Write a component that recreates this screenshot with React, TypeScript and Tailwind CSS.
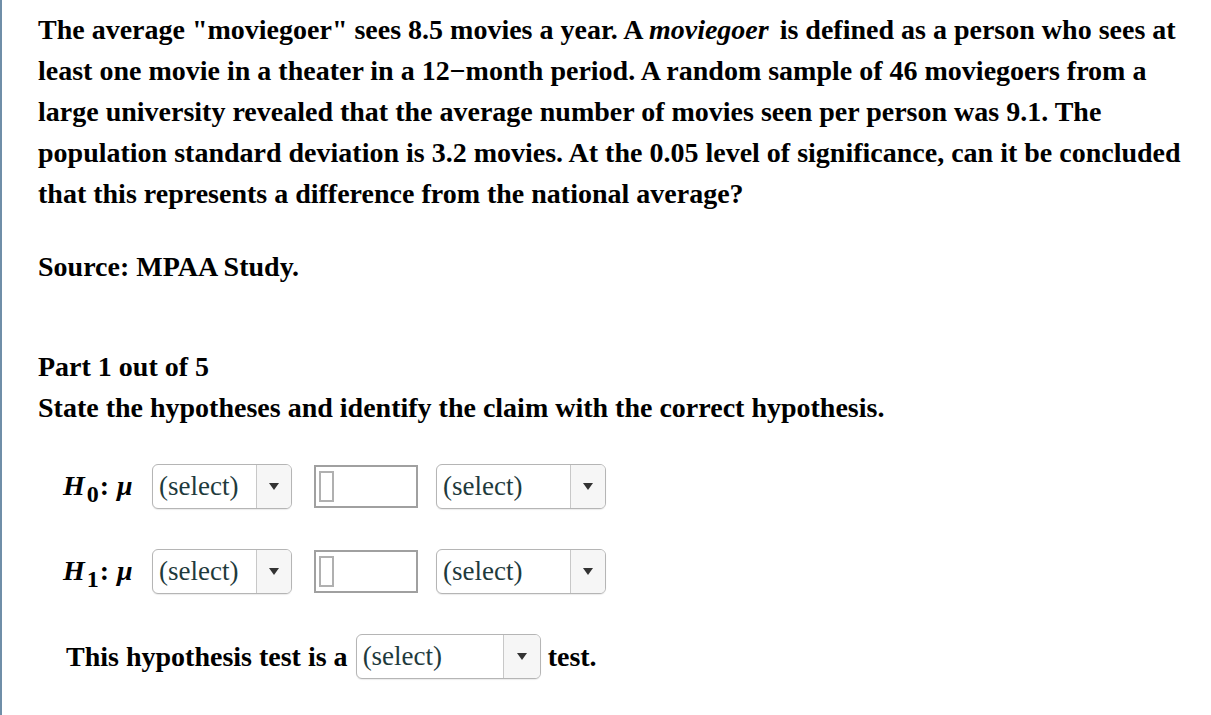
import React from "react";

function Select({ width, arrowWidth = 35 }: { width: number; arrowWidth?: number }) {
  return (
    <div
      className="flex h-[45px] rounded-[6px] border border-[#b5b5b5] bg-white shadow-[0_1px_1px_rgba(0,0,0,0.08)] overflow-hidden"
      style={{ width }}
    >
      <div className="flex-1 flex items-center pl-[6px] text-[27px] font-normal text-[#1e3a3c]">
        (select)
      </div>
      <div
        className="flex items-center justify-center border-l border-[#c8c8c8] bg-[#f6f6f6]"
        style={{ width: arrowWidth }}
      >
        <svg width="10" height="7" viewBox="0 0 10 7">
          <path d="M0 0 L10 0 L5 7 Z" fill="#333" />
        </svg>
      </div>
    </div>
  );
}

function Blank() {
  return (
    <div className="flex items-center h-[43px] w-[104px] border-2 border-[#a0a0a0] bg-white pl-[3px]">
      <div className="h-[31px] w-[15px] border-2 border-[#b0b0b0]" />
    </div>
  );
}

function HypRow({ sub }: { sub: string }) {
  return (
    <div className="flex items-center">
      <div className="flex items-baseline w-[114px] pl-[25px] text-[28px] font-bold italic">
        <span>H</span>
        <span className="text-[24px] not-italic relative top-[7px] ml-[2px]">{sub}</span>
        <span className="not-italic ml-[1px]">:</span>
        <span className="ml-[8px]">μ</span>
      </div>
      <Select width={140} />
      <div className="w-[22px]" />
      <Blank />
      <div className="w-[18px]" />
      <Select width={170} />
    </div>
  );
}

export default function App() {
  return (
    <div
      className="min-h-[715px] w-[1211px] bg-white border-l-2 border-[#6f8ea8] text-black"
      style={{ fontFamily: '"Liberation Serif", "Times New Roman", serif' }}
    >
      <div className="pl-[36px] pt-[9px] text-[28px] font-bold leading-[41px] whitespace-nowrap">
        <p>
          The average "moviegoer" sees 8.5 movies a year. A <i>moviegoer</i>
          <span className="ml-[4px]"> is defined as a person who sees at</span>
          <br />
          least one movie in a theater in a 12−month period. A random sample of 46 moviegoers from a
          <br />
          large university revealed that the average number of movies seen per person was 9.1. The
          <br />
          population standard deviation is 3.2 movies. At the 0.05 level of significance, can it be concluded
          <br />
          that this represents a difference from the national average?
        </p>
        <p className="mt-[32px]">Source: MPAA Study.</p>
        <p className="mt-[59px]">Part 1 out of 5</p>
        <p>State the hypotheses and identify the claim with the correct hypothesis.</p>

        <div className="mt-[36px]">
          <HypRow sub="0" />
        </div>
        <div className="mt-[40px]">
          <HypRow sub="1" />
        </div>
        <div className="mt-[40px] flex items-center pl-[28px]">
          <span className="mr-[8px]">This hypothesis test is a</span>
          <Select width={185} arrowWidth={37} />
          <span className="ml-[7px]">test.</span>
        </div>
      </div>
    </div>
  );
}
